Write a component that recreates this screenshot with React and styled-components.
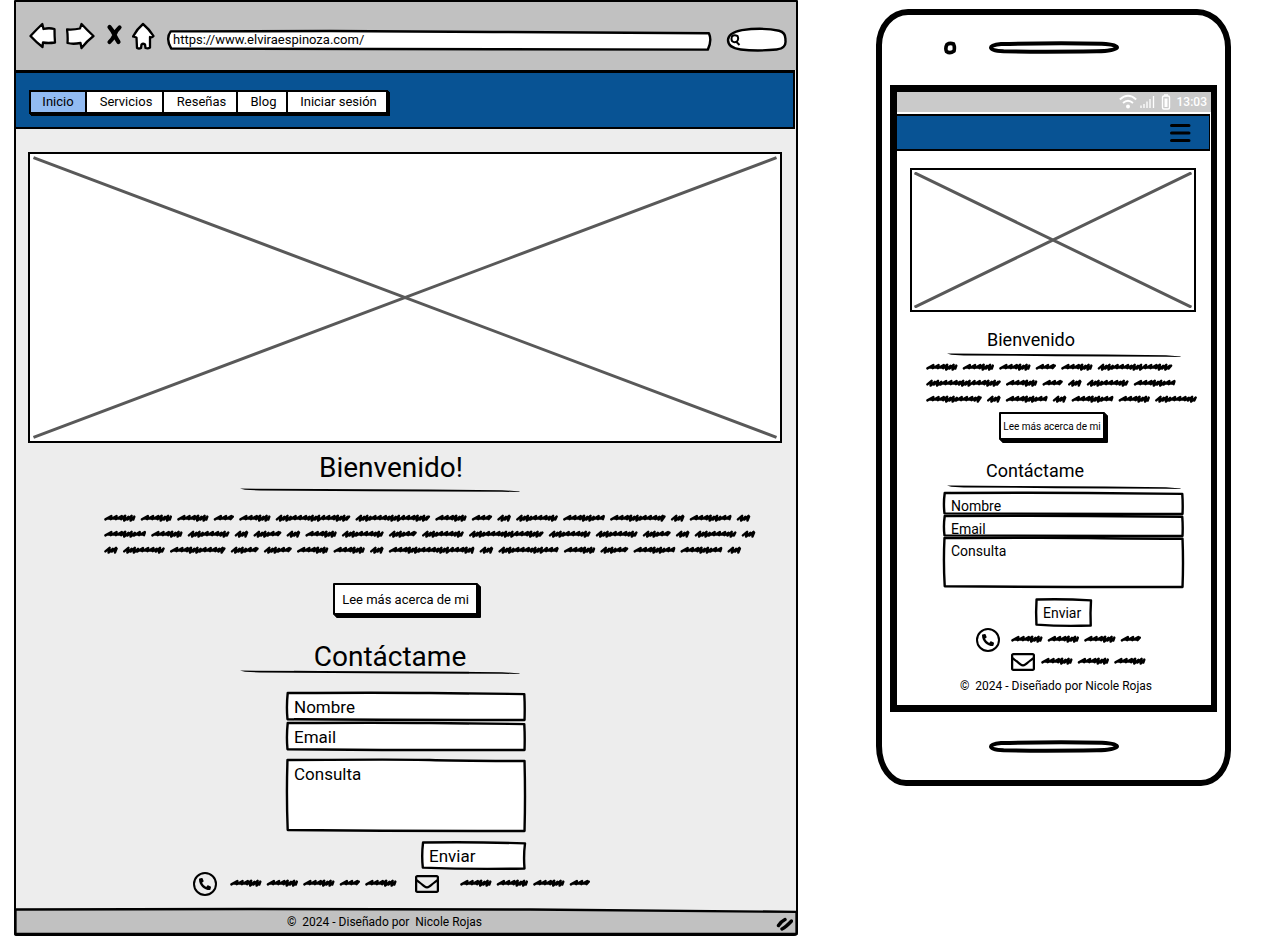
import React from "react";
import styled, { createGlobalStyle } from "styled-components";
import { FaPhoneAlt, FaRegEnvelope } from "react-icons/fa";

const ink = "#000";
const gray = "#c1c1c1";
const blue = "#085394";

const GlobalStyle = createGlobalStyle`
  *, *::before, *::after { box-sizing: border-box; }
  body {
    margin: 0;
    background: #fff;
    color: ${ink};
    font-family: Roboto, "Liberation Sans", sans-serif;
    font-size: 13px;
  }
  button, input, textarea { font: inherit; color: inherit; }
  svg { display: block; }
`;

/* ---------- hand-drawn primitives ---------- */

const FrameSvg = styled.svg`
  position: absolute;
  inset: 1px;
  width: calc(100% - 2px);
  height: calc(100% - 2px);
  overflow: visible;
  pointer-events: none;
  z-index: 0;
`;

const SHAPES = {
  field: "M0.3 0 Q40 -2 60 0 T99.7 4 Q100 50 99.8 100 Q50 101 0.2 97 Q-0.3 50 0.3 0 Z",
  area: "M0.2 0 Q50 -1 60 0 T99.8 1.5 Q100.2 50 99.8 100 Q50 100.5 0.3 98.5 Q-0.3 50 0.2 0 Z",
  address: "M0.5 2 L30 0 L60 5 L99.8 12 Q100.4 50 99.6 98 L60 96 L0.6 93 Q-0.5 40 0.5 2 Z",
  send: "M1 2 Q50 -1 100 5 Q98.5 50 99.5 98 Q50 102 0.8 95 Q-0.5 50 1 2 Z",
  search: "M24 5 Q60 -8 88 8 Q100 16 99 50 Q101 88 84 93 Q50 102 22 93 Q0 86 0 50 Q0 18 24 5 Z",
  slot: "M8 12 Q50 -2 88 8 Q100 16 100 50 Q98 88 84 92 Q40 100 10 92 Q0 86 0 50 Q0 24 8 12 Z",
  footer: "M-0.2 2 L30 0 L66 2 L100.2 12 L100.2 104 L-0.2 104 Z",
};

function Frame({ shape, fill = "#fff", weight = 2.4 }) {
  return (
    <FrameSvg viewBox="0 0 100 100" preserveAspectRatio="none" aria-hidden="true">
      <path
        d={SHAPES[shape]}
        fill={fill}
        stroke={ink}
        strokeWidth={weight}
        strokeLinejoin="round"
        vectorEffect="non-scaling-stroke"
      />
    </FrameSvg>
  );
}

const WORD_WIDTH = { 1: 14, 2: 20.7, 3: 28.3, 4: 31.7, 5: 42.2, 6: 56, 7: 60.7, 8: 75, 9: 86 };
const WORD_GAP = 4.8;

// Positive words open with loose strokes, negative ones open tight.
function wordPath(x, cy, code) {
  const width = WORD_WIDTH[Math.abs(code)];
  const end = x + width - 1.4;
  let px = x + 1.4;
  let i = code < 0 ? 3 : 0;
  let d = `M${px.toFixed(1)} ${cy + 1.4}`;
  while (px < end - 3) {
    const loose = i % 7 < 3;
    const top = Math.min(px + (loose ? 6 : 4.2), end);
    d += ` L${top.toFixed(1)} ${cy - (loose ? 2 : 1.2 + (i % 2))}`;
    px = top - (loose ? 0.8 : 1);
    d += ` L${px.toFixed(1)} ${(cy + (loose ? 1.2 : 1.6 + (i % 2))).toFixed(1)}`;
    i += 1;
  }
  d += ` L${end.toFixed(1)} ${cy - 1.4}`;
  return `${d} M${(x + 4).toFixed(1)} ${cy + 0.6} H${(end - 2).toFixed(1)}`;
}

const ScribbleSvg = styled.svg`
  flex: none;
  overflow: visible;
`;

function Scribble({ lines }) {
  let width = 0;
  const words = [];
  lines.forEach((line, row) => {
    let x = 0;
    line.forEach((code) => {
      words.push(wordPath(x, row * 16 + 8, code));
      x += WORD_WIDTH[Math.abs(code)] + WORD_GAP;
    });
    width = Math.max(width, Math.round(x - WORD_GAP));
  });
  return (
    <ScribbleSvg width={width} height={lines.length * 16} aria-hidden="true">
      <path d={words.join(" ")} fill="none" stroke={ink} strokeWidth="2.4" strokeLinecap="round" strokeLinejoin="round" />
    </ScribbleSvg>
  );
}

const RuleSvg = styled.svg`
  width: ${(p) => p.$width}px;
  max-width: 100%;
  height: 5px;
  margin: ${(p) => p.$margin};
`;

function Rule({ width, margin }) {
  return (
    <RuleSvg $width={width} $margin={margin} viewBox="0 0 280 5" preserveAspectRatio="none" aria-hidden="true">
      <path d="M0 0.6 L80 1 L190 1.4 L262 2.2 L280 3.4 L279 4 L262 3.8 L130 3.2 L20 2.4 L5 1.8 Z" fill={ink} />
    </RuleSvg>
  );
}

const PictureBox = styled.div`
  height: ${(p) => p.$height}px;
  margin: ${(p) => p.$margin};
  padding: 2px;
  border: 2px solid ${ink};
  background: #fff;
  svg { width: 100%; height: 100%; }
`;

function Picture({ height, margin }) {
  return (
    <PictureBox $height={height} $margin={margin} role="img" aria-label="Imagen">
      <svg viewBox="0 0 100 100" preserveAspectRatio="none">
        <path d="M0.2 0.6 L99.8 99.4 M99.8 0.6 L0.2 99.4" stroke="#595959" strokeWidth="3" vectorEffect="non-scaling-stroke" />
      </svg>
    </PictureBox>
  );
}

/* ---------- shared content parts ---------- */

const Title = styled.h2`
  margin: ${(p) => p.$margin};
  font-size: ${(p) => (p.$small ? 18 : 28)}px;
  line-height: ${(p) => (p.$small ? 22 : 32)}px;
  font-weight: 400;
  text-align: center;
`;

const MoreButton = styled.button`
  display: block;
  width: ${(p) => (p.$small ? 106 : 145)}px;
  height: ${(p) => (p.$small ? 28 : 32)}px;
  margin: ${(p) => p.$margin};
  padding: 1px 0 0;
  border: 2px solid ${ink};
  border-radius: 1px;
  background: #fff;
  box-shadow: 1px 1px 0 ${ink}, 2px 2px 0 ${ink}, 3px 3px 0 ${ink};
  font-size: ${(p) => (p.$small ? 10 : 13)}px;
  white-space: nowrap;
`;

const Form = styled.form`
  display: flex;
  flex-direction: column;
  width: ${(p) => (p.$small ? 241 : 240)}px;
  margin: ${(p) => p.$margin};
  font-size: ${(p) => (p.$small ? 14 : 17)}px;
`;

const Field = styled.div`
  position: relative;
  height: ${(p) => p.$height}px;
  margin-bottom: ${(p) => p.$gap || 0}px;

  input, textarea {
    position: relative;
    display: block;
    width: 100%;
    height: 100%;
    padding: ${(p) => p.$pad || "0 8px"};
    border: 0;
    outline: 0;
    background: transparent;
    line-height: 20px;
    resize: none;
    overflow: hidden;
  }
  ::placeholder { color: ${ink}; opacity: 1; }
`;

const SendButton = styled.button`
  position: relative;
  align-self: ${(p) => (p.$small ? "center" : "flex-end")};
  width: ${(p) => (p.$small ? 57 : 105)}px;
  height: 29px;
  padding: 0 8px;
  border: 0;
  background: transparent;
  text-align: left;
  span { position: relative; }
`;

const Contact = styled.div`
  display: flex;
  align-items: center;
  gap: ${(p) => p.$gap}px;
  height: 24px;
  margin: ${(p) => p.$margin || 0};
  ${ScribbleSvg} { margin-bottom: 3px; }
`;

const PhoneBadge = styled.span`
  display: grid;
  place-items: center;
  flex: none;
  width: 24px;
  height: 24px;
  border: 2px solid ${ink};
  border-radius: 50%;
`;

const Copyright = styled.p`
  position: relative;
  margin: ${(p) => p.$margin || 0};
  font-size: 12px;
  line-height: 16px;
  text-align: center;
  white-space: pre;
`;

/* ---------- browser mockup ---------- */

const Page = styled.div`
  display: grid;
  grid-template-columns: minmax(0, 1fr) 355px;
  gap: 78px;
  align-items: start;
  padding: 0 35px 12px 14px;
`;

const Browser = styled.section`
  border: 2px solid ${ink};
  border-radius: 1px 1px 4px 2px;
  background: #ededed;
`;

const Toolbar = styled.div`
  display: flex;
  align-items: center;
  height: 68px;
  padding: 0 9px 0 13px;
  background: ${gray};
`;

const ToolGroup = styled.div`
  display: flex;
  gap: 9px;
  margin-right: 11px;
`;

const ToolButton = styled.button`
  padding: 0;
  border: 0;
  background: none;
`;

const Address = styled.div`
  position: relative;
  flex: 1;
  height: 21px;
  margin: 8px 16px 0 0;
  input {
    position: relative;
    display: block;
    width: 100%;
    height: 100%;
    padding: 0 6px 1px;
    border: 0;
    outline: 0;
    background: transparent;
  }
`;

const Search = styled.button`
  position: relative;
  width: 60px;
  height: 24px;
  margin-top: 8px;
  padding: 0 3px;
  border: 0;
  background: none;
  svg + svg { position: relative; }
`;

const NavBar = styled.nav`
  height: 59px;
  margin-right: 1px;
  padding: 17px 13px 0;
  border: solid ${ink};
  border-width: 3px 2px 2px 0;
  background: ${blue};
`;

const Tabs = styled.div`
  display: inline-flex;
  height: 24px;
  border: 2px solid ${ink};
  border-right: 0;
  background: #fff;
  box-shadow: 1px 1px 0 ${ink}, 2px 2px 0 ${ink};
`;

const Tab = styled.a`
  width: ${(p) => p.$width}px;
  border-right: 2px solid ${ink};
  background: ${(p) => (p.$active ? "#92bbf2" : "#fff")};
  color: ${ink};
  line-height: 20px;
  text-align: center;
  text-decoration: none;
  white-space: nowrap;
  & + & { padding-left: 3px; }
`;

const ParagraphBlock = styled.div`
  padding-left: 88px;
`;

const ContactRow = styled.div`
  display: flex;
  justify-content: center;
  gap: 18px;
  margin: 2px 30px 0 0;
`;

const Footer = styled.footer`
  position: relative;
  height: 26px;
  margin-top: 12px;
  padding: 6px 0 0;
`;

const Grip = styled.svg`
  position: absolute;
  right: 3px;
  bottom: 2px;
`;

const TABS = [
  { label: "Inicio", width: 56 },
  { label: "Servicios", width: 77 },
  { label: "Reseñas", width: 74 },
  { label: "Blog", width: 50 },
  { label: "Iniciar sesión", width: 100 },
];

const ARROW = { fill: "#fff", stroke: ink, strokeWidth: 2.3, strokeLinejoin: "round" };

function BrowserMockup() {
  return (
    <Browser>
      <Toolbar>
        <ToolGroup>
          <ToolButton aria-label="Atrás">
            <svg width="28" height="28" viewBox="0 0 28 28">
              <path {...ARROW} d="M1.5 14 Q8 7 13.3 2 L14.5 7 Q20 5.5 25.5 7 Q25.5 14 26 20.5 Q19 21.5 14 20.5 L13.5 25 Q7 20 1.5 14 Z" />
            </svg>
          </ToolButton>
          <ToolButton aria-label="Adelante">
            <svg width="30" height="28" viewBox="0 0 30 28">
              <path {...ARROW} d="M1 7.5 Q8 8 14 6.5 L15.5 2 Q21 8 27.5 14 Q21 19 15.5 26 L14.5 21 Q7 22.5 1.5 21 Q2 14 1 7.5 Z" />
            </svg>
          </ToolButton>
          <ToolButton aria-label="Detener">
            <svg width="18" height="28" viewBox="0 0 18 28">
              <path d="M4.5 5 Q8 9 9.5 13 Q11.5 17 13.5 20 M14.5 5.5 Q10.5 9 9.5 13 Q7.5 17.5 4.5 20" fill="none" stroke={ink} strokeWidth="4.2" strokeLinecap="round" />
            </svg>
          </ToolButton>
          <ToolButton aria-label="Página principal">
            <svg width="24" height="28" viewBox="0 0 24 28">
              <path {...ARROW} d="M11 2 Q17 7 21.5 14 Q20 16 18 15 L18 25.5 Q16 27 13.5 26 L13 22.5 Q11 21 9.5 22.5 L9 26 Q7 27 5 26 L4.5 15.5 L1 14.5 Q5 7 11 2 Z" />
            </svg>
          </ToolButton>
        </ToolGroup>
        <Address>
          <Frame shape="address" />
          <input aria-label="Dirección" defaultValue="https://www.elviraespinoza.com/" />
        </Address>
        <Search aria-label="Buscar">
          <Frame shape="search" />
          <svg width="12" height="12" viewBox="0 0 12 12" fill="none" stroke={ink} strokeWidth="2">
            <path d="M2 2.5 Q4 0.5 7.5 2 Q9 5 7 7.5 Q4 9 2 7 Q1 5 2 2.5 Z M6 7.5 L9.5 11" />
          </svg>
        </Search>
      </Toolbar>
      <NavBar>
        <Tabs>
          {TABS.map(({ label, width }, i) => (
            <Tab key={label} href="#" $width={width} $active={i === 0}>{label}</Tab>
          ))}
        </Tabs>
      </NavBar>

      <Picture height={291} margin="23px 14px 9px 12px" />

      <Title $margin="0 30px 0 0">Bienvenido!</Title>
      <Rule width={280} margin="4px auto 17px 224px" />
      <ParagraphBlock>
        <Scribble
          lines={[
            [4, 4, 4, 2, 4, -8, -8, 4, 2, -1, -5, 5, 6, -1, 5, -1],
            [5, 4, -5, -1, -3, -1, 4, -5, -3, -5, -8, -5, -5, -3, -1, -5, -1],
            [-1, -5, 6, -3, -3, 4, 4, -1, 9, -1, -7, 4, -3, 5, 5, -1],
          ]}
        />
      </ParagraphBlock>
      <MoreButton type="button" $margin="25px auto 0 317px">Lee más acerca de mi</MoreButton>

      <Title $margin="26px 32px 0 0">Contáctame</Title>
      <Rule width={280} margin="-3px auto 17px 224px" />
      <Form $margin="0 auto" onSubmit={(e) => e.preventDefault()}>
        <Field $height={29} $gap={1}>
          <Frame shape="field" />
          <input aria-label="Nombre" placeholder="Nombre" />
        </Field>
        <Field $height={29} $gap={8}>
          <Frame shape="field" />
          <input aria-label="Email" placeholder="Email" />
        </Field>
        <Field $height={73} $gap={9} $pad="5px 8px">
          <Frame shape="area" />
          <textarea aria-label="Consulta" placeholder="Consulta" />
        </Field>
        <SendButton>
          <Frame shape="send" />
          <span>Enviar</span>
        </SendButton>
      </Form>

      <ContactRow>
        <Contact $gap={13}>
          <PhoneBadge><FaPhoneAlt size={12} /></PhoneBadge>
          <Scribble lines={[[4, 4, 4, 2, 4]]} />
        </Contact>
        <Contact $gap={21}>
          <FaRegEnvelope size={24} />
          <Scribble lines={[[4, 4, 4, 2]]} />
        </Contact>
      </ContactRow>

      <Footer>
        <Frame shape="footer" fill={gray} />
        <Copyright $margin="0 43px 0 0">{"©  2024 - Diseñado por  Nicole Rojas"}</Copyright>
        <Grip width="17" height="16" viewBox="0 0 17 16" aria-hidden="true">
          <path d="M2.5 9.5 Q5 5.5 9 3.5 M6 13 Q10 11 15.5 5" fill="none" stroke={ink} strokeWidth="3.4" strokeLinecap="round" />
        </Grip>
      </Footer>
    </Browser>
  );
}

/* ---------- phone mockup ---------- */

const Phone = styled.section`
  margin-top: 9px;
  border: 6px solid ${ink};
  border-radius: 32px 34px 30px 30px / 36px 38px 36px 40px;
  background: #fff;
`;

const PhoneTop = styled.div`
  display: flex;
  align-items: center;
  gap: 33px;
  height: 70px;
  padding: 0 0 5px 61px;
`;

const PhoneBottom = styled.div`
  display: flex;
  justify-content: center;
  align-items: center;
  height: 68px;
`;

const Slot = styled.div`
  position: relative;
  width: 128px;
  height: 11px;
`;

const Screen = styled.div`
  margin: 0 8px;
  padding-bottom: 7px;
  border: solid ${ink};
  border-width: 7px 6px 7px 7px;
`;

const StatusBar = styled.div`
  display: flex;
  align-items: center;
  justify-content: flex-end;
  gap: 6px;
  height: 20px;
  margin-bottom: 2px;
  padding-right: 4px;
  background: #cacaca;
  color: #fff;
  font-size: 12px;
  font-weight: 500;
`;

const PhoneNav = styled.nav`
  display: flex;
  justify-content: flex-end;
  align-items: center;
  height: 37px;
  margin-right: 1px;
  padding-right: 17px;
  border: solid ${ink};
  border-width: 2px 1px 2px 0;
  background: ${blue};
`;

const PhoneContact = styled(ParagraphBlock)`
  padding-left: 79px;
`;

const PhoneText = styled(ParagraphBlock)`
  padding-left: 29px;
`;

function PhoneMockup() {
  return (
    <Phone>
      <PhoneTop>
        <svg width="14" height="14" viewBox="0 0 14 14" aria-hidden="true">
          <path d="M4 3.5 Q7 1.5 10.5 3 Q12 6 11 10 Q7 13 3.5 10.5 Q2 7 4 3.5 Z" fill="none" stroke={ink} strokeWidth="3.6" />
        </svg>
        <Slot><Frame shape="slot" weight={4} /></Slot>
      </PhoneTop>
      <Screen>
        <StatusBar>
          <svg width="52" height="16" viewBox="0 0 52 16" aria-hidden="true">
            <g fill="none" stroke="#fff" strokeWidth="1.8">
              <path d="M0.8 5.5 Q9 -2 17.2 5.5" />
              <path d="M4 9 Q9 4.5 14 9" />
            </g>
            <circle cx="9" cy="12.5" r="2" fill="#fff" />
            <path d="M22 14 V11.5 M25 14 V10 M28 14 V7.5 M31 14 V5 M34.5 14 V2" stroke="#fff" strokeWidth="1.3" />
            <rect x="43.5" y="2" width="7" height="13" rx="1.5" fill="none" stroke="#fff" strokeWidth="1.4" />
            <path d="M45.5 4.5 h3 v8.5 h-3 Z M45 0.3 h4 v1.2 h-4 Z" fill="#fff" />
          </svg>
          <span>13:03</span>
        </StatusBar>
        <PhoneNav>
          <ToolButton aria-label="Menú">
            <svg width="24" height="20" viewBox="0 0 24 20">
              <path d="M3.5 2.5 H21 M3.5 10 H21 M3.5 17.5 H21" stroke={ink} strokeWidth="3" strokeLinecap="round" />
            </svg>
          </ToolButton>
        </PhoneNav>

        <Picture height={144} margin="17px 15px 17px 13px" />

        <Title $small $margin="0 46px 0 0">Bienvenido</Title>
        <Rule width={234} margin="2px auto 1px 50px" />
        <PhoneText>
          <Scribble
            lines={[
              [4, 4, 4, 2, 4, -8],
              [-8, 4, 2, -1, -5, 5],
              [6, -1, 5, -1, 5, 4, -5],
            ]}
          />
        </PhoneText>
        <MoreButton type="button" $small $margin="5px auto 0 102px">Lee más acerca de mi</MoreButton>

        <Title $small $margin="20px 38px 0 0">Contáctame</Title>
        <Rule width={234} margin="3px auto 2px 50px" />
        <Form $small $margin="0 27px 1px 46px" onSubmit={(e) => e.preventDefault()}>
          <Field $height={23} $pad="5px 8px 0">
            <Frame shape="field" />
            <input aria-label="Nombre" placeholder="Nombre" />
          </Field>
          <Field $height={22} $pad="5px 8px 0">
            <Frame shape="field" />
            <input aria-label="Email" placeholder="Email" />
          </Field>
          <Field $height={51} $gap={10} $pad="4px 8px">
            <Frame shape="area" />
            <textarea aria-label="Consulta" placeholder="Consulta" />
          </Field>
          <SendButton $small>
            <Frame shape="send" />
            <span>Enviar</span>
          </SendButton>
        </Form>

        <PhoneContact>
          <Contact $gap={11}>
            <PhoneBadge><FaPhoneAlt size={12} /></PhoneBadge>
            <Scribble lines={[[4, 4, 4, 2]]} />
          </Contact>
          <Contact $gap={6} $margin="-2px 0 0 35px">
            <FaRegEnvelope size={24} />
            <Scribble lines={[[4, 4, 4]]} />
          </Contact>
        </PhoneContact>
        <Copyright $margin="4px 0 4px 4px">{"©  2024 - Diseñado por Nicole Rojas"}</Copyright>
      </Screen>
      <PhoneBottom>
        <Slot><Frame shape="slot" weight={4} /></Slot>
      </PhoneBottom>
    </Phone>
  );
}

export default function App() {
  return (
    <>
      <GlobalStyle />
      <Page>
        <BrowserMockup />
        <PhoneMockup />
      </Page>
    </>
  );
}
